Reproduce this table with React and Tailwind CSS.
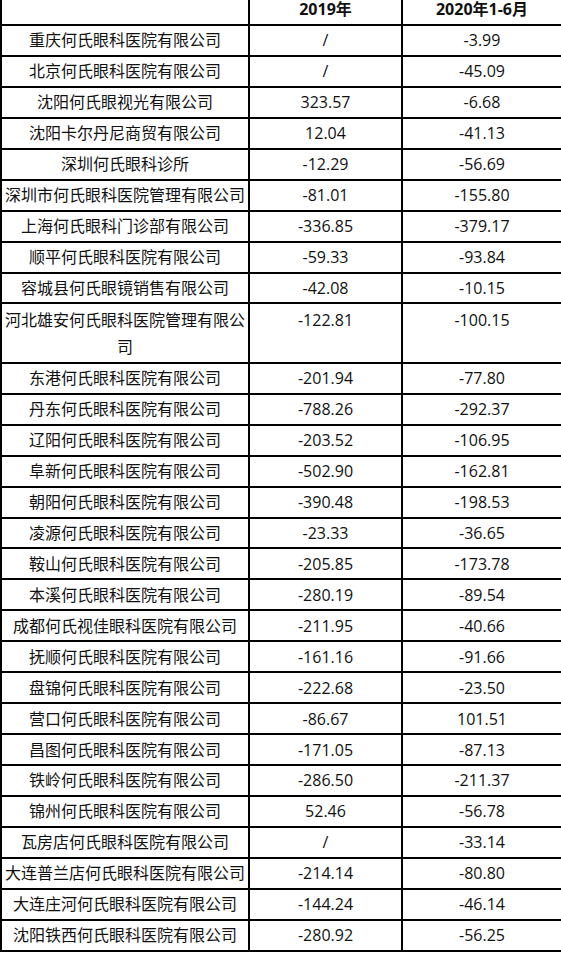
import React from "react";

const rows = [
  ["重庆何氏眼科医院有限公司", "/", "-3.99"],
  ["北京何氏眼科医院有限公司", "/", "-45.09"],
  ["沈阳何氏眼视光有限公司", "323.57", "-6.68"],
  ["沈阳卡尔丹尼商贸有限公司", "12.04", "-41.13"],
  ["深圳何氏眼科诊所", "-12.29", "-56.69"],
  ["深圳市何氏眼科医院管理有限公司", "-81.01", "-155.80"],
  ["上海何氏眼科门诊部有限公司", "-336.85", "-379.17"],
  ["顺平何氏眼科医院有限公司", "-59.33", "-93.84"],
  ["容城县何氏眼镜销售有限公司", "-42.08", "-10.15"],
  ["河北雄安何氏眼科医院管理有限公司", "-122.81", "-100.15", true],
  ["东港何氏眼科医院有限公司", "-201.94", "-77.80"],
  ["丹东何氏眼科医院有限公司", "-788.26", "-292.37"],
  ["辽阳何氏眼科医院有限公司", "-203.52", "-106.95"],
  ["阜新何氏眼科医院有限公司", "-502.90", "-162.81"],
  ["朝阳何氏眼科医院有限公司", "-390.48", "-198.53"],
  ["凌源何氏眼科医院有限公司", "-23.33", "-36.65"],
  ["鞍山何氏眼科医院有限公司", "-205.85", "-173.78"],
  ["本溪何氏眼科医院有限公司", "-280.19", "-89.54"],
  ["成都何氏视佳眼科医院有限公司", "-211.95", "-40.66"],
  ["抚顺何氏眼科医院有限公司", "-161.16", "-91.66"],
  ["盘锦何氏眼科医院有限公司", "-222.68", "-23.50"],
  ["营口何氏眼科医院有限公司", "-86.67", "101.51"],
  ["昌图何氏眼科医院有限公司", "-171.05", "-87.13"],
  ["铁岭何氏眼科医院有限公司", "-286.50", "-211.37"],
  ["锦州何氏眼科医院有限公司", "52.46", "-56.78"],
  ["瓦房店何氏眼科医院有限公司", "/", "-33.14"],
  ["大连普兰店何氏眼科医院有限公司", "-214.14", "-80.80"],
  ["大连庄河何氏眼科医院有限公司", "-144.24", "-46.14"],
  ["沈阳铁西何氏眼科医院有限公司", "-280.92", "-56.25"],
];

function Row({ name, a, b, tall }) {
  if (tall) {
    return (
      <>
        <div className="bg-white h-[57.4px] px-[3px] pt-[3px] text-center leading-[26.7px]">{name}</div>
        <div className="bg-white h-[57.4px] pt-[2px] text-center leading-[29px]">{a}</div>
        <div className="bg-white h-[57.4px] pt-[2px] text-center leading-[29px]">{b}</div>
      </>
    );
  }
  return (
    <>
      <div className="bg-white h-[28.95px] flex items-center justify-center whitespace-nowrap">{name}</div>
      <div className="bg-white h-[28.95px] flex items-center justify-center">{a}</div>
      <div className="bg-white h-[28.95px] flex items-center justify-center">{b}</div>
    </>
  );
}

export default function App() {
  return (
    <div className="w-[561px] h-[954px] bg-white overflow-hidden font-['Open_Sans','Noto_Sans_CJK_SC',sans-serif] text-[16px] text-[#111]">
      <div className="grid grid-cols-[246px_151px_158px] gap-[2px] bg-black pl-[2px] pb-[2px]">
        <div className="bg-white h-[24px]"></div>
        <div className="bg-white h-[24px] text-center font-bold leading-[19px]">2019年</div>
        <div className="bg-white h-[24px] text-center font-bold leading-[19px]">2020年1-6月</div>
        {rows.map(([n, a, b, t]) => (
          <Row key={n} name={n} a={a} b={b} tall={t} />
        ))}
      </div>
    </div>
  );
}
